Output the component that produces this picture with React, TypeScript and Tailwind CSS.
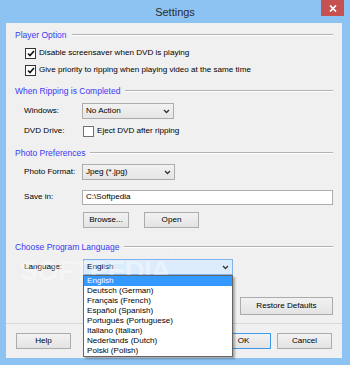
import React from "react";

const LANGUAGES = [
  "English",
  "Deutsch (German)",
  "Français (French)",
  "Español (Spanish)",
  "Português (Portuguese)",
  "Italiano (Italian)",
  "Nederlands (Dutch)",
  "Polski (Polish)",
];

function Heading({ label, className = "" }: { label: string; className?: string }) {
  return (
    <div className={`flex items-center h-[14px] pl-[9px] pr-[9px] ${className}`}>
      <span className="text-[8.5px] leading-none text-[#3a3af4] whitespace-nowrap">{label}</span>
      <div className="flex-1 ml-[5px] h-[2px] border-t border-t-[#b2b2b2] border-b border-b-white" />
    </div>
  );
}

function Chevron() {
  return (
    <svg width="7" height="5" viewBox="0 0 7 5" className="shrink-0">
      <path d="M1 1 L3.5 3.5 L6 1" fill="none" stroke="#333" strokeWidth="1.3" />
    </svg>
  );
}

function Select({ value, width, focused = false }: { value: string; width: string; focused?: boolean }) {
  return (
    <div
      className={`flex items-center h-[16px] ${width} border pl-[3px] pr-[3px] ${
        focused
          ? "border-[#7eb4ea] bg-[#dcecfc]"
          : "border-[#acacac] bg-linear-to-b from-[#f2f2f2] to-[#e5e5e5]"
      }`}
    >
      <span className="flex-1 whitespace-nowrap">{value}</span>
      <Chevron />
    </div>
  );
}

function Checkbox({ checked }: { checked: boolean }) {
  return (
    <div
      className={`w-[11px] h-[11px] shrink-0 border bg-white flex items-center justify-center ${
        checked ? "border-[#333]" : "border-[#707070]"
      }`}
    >
      {checked && (
        <svg width="8" height="7" viewBox="0 0 8 7">
          <path d="M1 3.5 L3 5.5 L7 1" fill="none" stroke="#111" strokeWidth="1.6" />
        </svg>
      )}
    </div>
  );
}

function Button({ label, width, isDefault = false, className = "" }: { label: string; width: string; isDefault?: boolean; className?: string }) {
  return (
    <div
      className={`flex items-center justify-center h-[16px] ${width} border ${
        isDefault ? "border-[#3c9ae8]" : "border-[#acacac]"
      } bg-linear-to-b from-[#f2f2f2] to-[#e3e3e3] ${className}`}
    >
      {label}
    </div>
  );
}

export default function App() {
  return (
    <div className="w-[350px] h-[365px] bg-[#8dc3f3] flex flex-col font-['Liberation_Sans',Arial,sans-serif] text-[8.1px] leading-none text-black">
      {/* Title bar */}
      <div className="grid grid-cols-[1fr_auto_1fr] h-[23px] shrink-0">
        <div />
        <div className="self-center text-[11px] text-[#2b2b2b] pt-[1px]">Settings</div>
        <div className="flex justify-end items-start">
          <div className="w-[23px] h-[16px] mr-[6px] bg-[#c75050] flex items-center justify-center">
            <svg width="8" height="7" viewBox="0 0 8 7">
              <path d="M1 0.5 L7 6.5 M7 0.5 L1 6.5" stroke="white" strokeWidth="1.7" />
            </svg>
          </div>
        </div>
      </div>

      {/* Client area */}
      <div className="relative ml-[6px] mr-[8px] h-[335px] bg-[#f0f0f0] flex flex-col pt-[5px]">
        <Heading label="Player Option" />
        <div className="flex items-center h-[22px] pl-[19px] gap-[3px]">
          <Checkbox checked />
          <span>Disable screensaver when DVD is playing</span>
        </div>
        <div className="flex items-center h-[12px] pl-[19px] gap-[3px]">
          <Checkbox checked />
          <span>Give priority to ripping when playing video at the same time</span>
        </div>

        <Heading label="When Ripping is Completed" className="mt-[8px]" />
        <div className="flex items-center h-[16px] mt-[5px] pl-[18px]">
          <span className="w-[58px]">Windows:</span>
          <Select value="No Action" width="w-[92px]" />
        </div>
        <div className="flex items-center h-[16px] mt-[4px] pl-[18px]">
          <span className="w-[59px]">DVD Drive:</span>
          <Checkbox checked={false} />
          <span className="ml-[3px]">Eject DVD after ripping</span>
        </div>

        <Heading label="Photo Preferences" className="mt-[7px]" />
        <div className="flex items-center h-[16px] mt-[4px] pl-[18px]">
          <span className="w-[58px]">Photo Format:</span>
          <Select value="Jpeg (*.jpg)" width="w-[93px]" />
        </div>
        <div className="flex items-center h-[15px] mt-[10px] pl-[18px] pr-[9px]">
          <span className="w-[58px]">Save in:</span>
          <div className="flex-1 h-[15px] border border-[#acacac] bg-white flex items-center pl-[3px]">C:\Softpedia</div>
        </div>
        <div className="flex items-center h-[16px] mt-[7px] pl-[77px] gap-[15px]">
          <Button label="Browse..." width="w-[46px]" />
          <Button label="Open" width="w-[55px]" />
        </div>

        <Heading label="Choose Program Language" className="mt-[12px]" />
        <div className="flex items-center h-[16px] mt-[5px] pl-[18px]">
          <span className="w-[59px]">Language:</span>
          <div className="relative">
            <Select value="English" width="w-[150px]" focused />
            {/* Open list */}
            <div className="absolute left-0 top-[16px] z-30 w-[150px] border border-[#646464] bg-white shadow-[2px_2px_2px_rgba(0,0,0,0.3)]">
              {LANGUAGES.map((lang, i) => (
                <div
                  key={lang}
                  className={`h-[10px] leading-[10px] pl-[3px] whitespace-nowrap ${
                    i === 0 ? "bg-[#3399ff] text-white" : ""
                  }`}
                >
                  {lang}
                </div>
              ))}
            </div>
          </div>
        </div>

        <div className="flex justify-end mt-[22px] pr-[9px]">
          <Button label="Restore Defaults" width="w-[93px]" className="h-[18px]" />
        </div>

        <div className="mt-[8px] h-px bg-[#d9d9d9]" />

        <div className="flex items-center justify-between h-[16px] mt-[9px] px-[10px]">
          <Button label="Help" width="w-[55px]" />
          <div className="flex gap-[6px]">
            <Button label="OK" width="w-[55px]" isDefault />
            <Button label="Cancel" width="w-[55px]" />
          </div>
        </div>

        {/* watermark */}
        <div className="absolute left-[14px] top-[235px] z-20 text-[27px] font-bold tracking-[-0.5px] text-white/40 pointer-events-none">
          SOFTPEDIA<sup className="text-[8px] align-top">®</sup>
        </div>
      </div>
    </div>
  );
}
